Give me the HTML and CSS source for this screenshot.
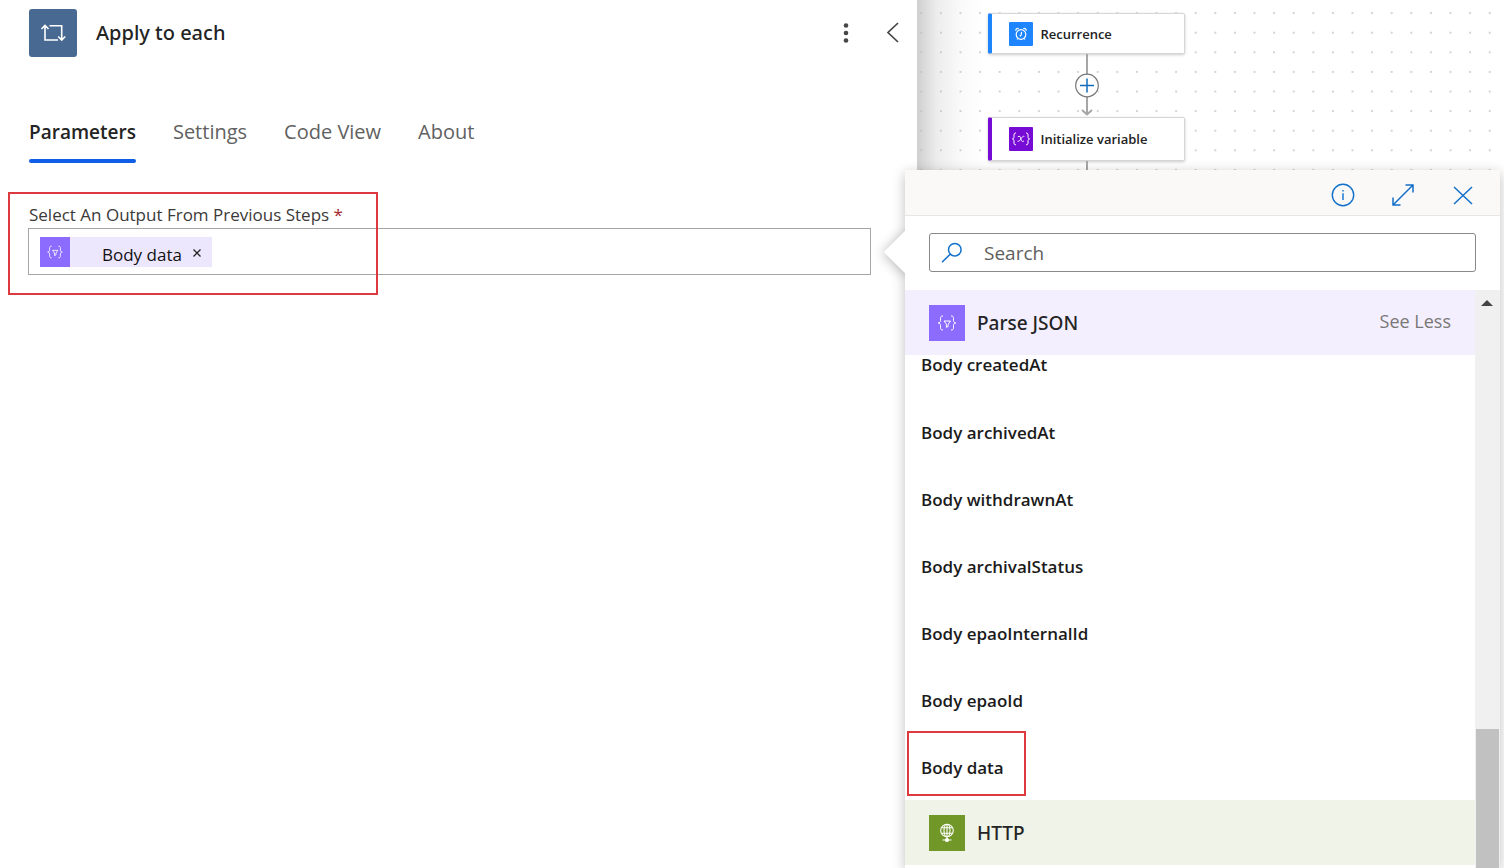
FILE: index.html
```html
<!DOCTYPE html>
<html lang="en">
<head>
<meta charset="utf-8">
<title>Apply to each</title>
<meta name="viewport" content="width=device-width, initial-scale=1">
<link rel="stylesheet" href="styles.css">
</head>
<body>
<svg class="sprite" aria-hidden="true">
  <symbol id="parse" viewBox="0 0 36 36">
    <path d="M14 11c-2 0-2.500 .8-2.500 2.300v2.200c0 1.500-.6 2.300-2.300 2.500 1.700 .2 2.300 1 2.300 2.500v2.200c0 1.500 .5 2.300 2.500 2.300M22 11c2 0 2.500 .8 2.500 2.300v2.200c0 1.500 .6 2.300 2.300 2.500-1.700 .2-2.300 1-2.300 2.500v2.200c0 1.500-.5 2.300-2.500 2.300" />
    <path d="M15 16h6.500l-2.300 3.200v2.300l-1.800 .8v-3.100z" />
  </symbol>
</svg>
<div class="app">
  <main class="panel">
    <header class="panel-header">
      <span class="panel-icon">
        <svg width="48" height="48" viewBox="0 0 48 48" fill="none" stroke="#fff" stroke-width="1.600"><path d="M16 17v14h13M12.500 20l3.500-3.500 3.500 3.500M20.500 16.800h12.200V30.500M29.200 27.500l3.500 3.500 3.500-3.500"/></svg>
      </span>
      <h1 class="panel-title">Apply to each</h1>
      <button class="icon-button" type="button" aria-label="More commands">
        <svg width="20" height="24" viewBox="0 0 20 24" fill="#484644"><circle cx="10" cy="4.500" r="2.300"/><circle cx="10" cy="12" r="2.300"/><circle cx="10" cy="19.500" r="2.300"/></svg>
      </button>
      <button class="icon-button" type="button" aria-label="Collapse panel">
        <svg width="20" height="24" viewBox="0 0 20 24" fill="none" stroke="#484644" stroke-width="1.700"><path d="M15 2L5 11.500l10 9.500"/></svg>
      </button>
    </header>
    <nav class="tabs" role="tablist">
      <button class="tab tab-active" type="button" role="tab" aria-selected="true">Parameters</button>
      <button class="tab" type="button" role="tab">Settings</button>
      <button class="tab" type="button" role="tab">Code View</button>
      <button class="tab" type="button" role="tab">About</button>
    </nav>
    <section class="field">
      <label class="field-label" for="output">Select An Output From Previous Steps <span class="required">*</span></label>
      <div class="token-box">
        <span class="token">
          <span class="token-icon"><svg class="glyph" width="30" height="30"><use href="#parse"/></svg></span>
          <span class="token-text">Body data</span>
          <button class="token-remove" type="button" aria-label="Remove Body data"><svg width="10" height="10" viewBox="0 0 10 10" stroke="#222" stroke-width="1.300"><path d="M1.500 2.500l7 7M8.500 2.500l-7 7"/></svg></button>
        </span>
        <input class="token-input" id="output" type="text">
      </div>
      <span class="highlight highlight-field"></span>
    </section>
  </main>

  <section class="canvas" aria-label="Flow designer">
    <svg class="grid" aria-hidden="true">
      <defs><pattern id="dots" x="-5.500" y="3.300" width="19.600" height="19.600" patternUnits="userSpaceOnUse"><circle cx="9.800" cy="9.800" r=".9" fill="#c0c0c0"/></pattern></defs>
      <rect width="100%" height="100%" fill="url(#dots)"/>
    </svg>
    <div class="flow">
      <article class="node node-blue">
        <svg class="node-icon" width="24" height="24" viewBox="0 0 24 24" fill="none" stroke="#fff" stroke-width="1.200"><rect width="24" height="24" rx="1" fill="#1f85ff" stroke="none"/><circle cx="12" cy="12.500" r="4.800"/><path d="M12.600 9.800l-.5 3.200-1.300 1.200M7 8.700c-.5-1.600 1.200-2.900 2.700-1.900M17 8.700c.5-1.600-1.200-2.900-2.700-1.900M8.800 16.500l-.8 1M15.200 16.500l.8 1"/></svg>
        <span>Recurrence</span>
      </article>
      <div class="connector">
        <svg width="24" height="63" viewBox="0 0 24 63" fill="none" stroke="#a6a6a6" stroke-width="2"><path d="M12 0v61M7 56l5 4.500 5-4.500"/><circle cx="12" cy="31.500" r="11.300" fill="#fff" stroke="#777" stroke-width="1.200"/><path d="M12 24.500v14M5 31.500h14" stroke="#0f6cbd" stroke-width="1.500"/></svg>
      </div>
      <article class="node node-purple">
        <svg class="node-icon" width="24" height="24" viewBox="0 0 24 24" fill="none" stroke="#fff" stroke-width="1"><rect width="24" height="24" rx="1" fill="#770bd6" stroke="none"/><path d="M7 6c-1.500 0-2 .6-2 1.800v2c0 1.200-.4 1.900-1.600 2.100 1.200 .2 1.600 .9 1.600 2.100v2c0 1.200 .5 1.800 2 1.800M17 6c1.500 0 2 .6 2 1.800v2c0 1.200 .4 1.900 1.600 2.100-1.200 .2-1.600 .9-1.600 2.100v2c0 1.200-.5 1.800-2 1.800"/><path d="M8.800 9.800c1.800-1.200 2.500-.4 3 1.800s1.200 3.700 3.200 2.300M15.300 9.500c-1.200-.7-2.200 .6-3.200 2.100s-2 3.200-3.500 2.600"/></svg>
        <span>Initialize variable</span>
      </article>
      <div class="connector connector-tail"><svg width="24" height="20" stroke="#a6a6a6" stroke-width="2"><path d="M12 0v20"/></svg></div>
    </div>
  </section>

  <aside class="picker">
    <div class="picker-body">
      <header class="picker-toolbar">
        <button class="tool" type="button" aria-label="Information"><svg width="24" height="24" viewBox="0 0 24 24" fill="none" stroke="#1170c9" stroke-width="1.400"><circle cx="12" cy="12" r="10.700"/><path d="M12 10.300v6.700M12 7v1.500"/></svg></button>
        <button class="tool" type="button" aria-label="Expand"><svg width="24" height="24" viewBox="0 0 24 24" fill="none" stroke="#1170c9" stroke-width="1.500"><path d="M2 22L22 2M14.500 2H22v7.500M2 14.500V22h7.500"/></svg></button>
        <button class="tool" type="button" aria-label="Close"><svg width="24" height="24" viewBox="0 0 24 24" fill="none" stroke="#1170c9" stroke-width="1.500"><path d="M3 4l18 17M21 4L3 21"/></svg></button>
      </header>
      <label class="search">
        <svg width="22" height="22" viewBox="0 0 22 22" fill="none" stroke="#1170c9" stroke-width="1.500"><circle cx="13.800" cy="7.700" r="6.300"/><path d="M9.200 12.200L1 20.300"/></svg>
        <input class="search-input" type="search" placeholder="Search" aria-label="Search">
      </label>
      <div class="picker-scroll">
        <div class="results">
          <div class="group group-parse">
            <svg class="group-icon glyph" width="36" height="36"><use href="#parse"/></svg>
            <h2 class="group-title">Parse JSON</h2>
            <button class="see-less" type="button">See Less</button>
          </div>
          <ul class="items">
            <li class="item-row item-row-cut"><button class="item" type="button">Body createdAt</button></li>
            <li class="item-row"><button class="item" type="button">Body archivedAt</button></li>
            <li class="item-row"><button class="item" type="button">Body withdrawnAt</button></li>
            <li class="item-row"><button class="item" type="button">Body archivalStatus</button></li>
            <li class="item-row"><button class="item" type="button">Body epaoInternalId</button></li>
            <li class="item-row"><button class="item" type="button">Body epaoId</button></li>
            <li class="item-row"><button class="item" type="button">Body data</button><span class="highlight highlight-item"></span></li>
          </ul>
          <div class="group group-http">
            <svg class="group-icon" width="36" height="36" viewBox="0 0 36 36" fill="none" stroke="#fff" stroke-width="1.100"><circle cx="18" cy="15.500" r="6.300"/><ellipse cx="18" cy="15.500" rx="3" ry="6.300"/><path d="M18 9.200v15M12.500 12.700h11M12.500 18.300h11M13.500 25h9"/><circle cx="18" cy="25" r="1.500" fill="#fff"/></svg>
            <h2 class="group-title">HTTP</h2>
          </div>
        </div>
        <div class="track" aria-hidden="true">
          <svg class="track-arrow" width="24" height="24"><path d="M6 16l6-6 6 6z" fill="#444"/></svg>
          <div class="thumb"></div>
        </div>
      </div>
    </div>
  </aside>
</div>
</body>
</html>
```
FILE: styles.css
```css
* { box-sizing: border-box; }
body {
  margin: 0;
  background: #fff;
  color: #242424;
  font-family: "Open Sans", "Noto Sans", sans-serif;
  font-size: 17px;
}
button, input { font: inherit; color: inherit; }
button { padding: 0; border: 0; background: none; cursor: pointer; }
input { border: 0; outline: 0; background: none; min-width: 0; }
svg { display: block; }
h1, h2, ul { margin: 0; padding: 0; }
ul { list-style: none; }
.sprite { position: absolute; width: 0; height: 0; }
.glyph { fill: none; stroke: #fff; stroke-width: 1; }

.app { position: relative; display: flex; height: 100vh; overflow: hidden; }

.panel { flex: 0 0 61%; background: #fff; padding: 9px 14px 0 28px; }
.panel-header { display: flex; align-items: center; gap: 27px; height: 48px; }
.panel-icon { margin-left: 1px; border-radius: 3px; background: #486991; }
.panel-title { flex: 1; margin-left: -8px; font-family: "Noto Sans", sans-serif; font-size: 20px; font-weight: 500; line-height: 28px; }
.icon-button { width: 20px; }

.tabs { display: flex; gap: 37px; margin: 60px 0 0 1px; }
.tab { position: relative; padding-bottom: 16px; color: #616161; font-size: 20px; line-height: 30px; }
.tab-active { color: #242424; font-size: 19px; font-weight: 600; }
.tab-active::after { content: ""; position: absolute; inset: auto 0 0; height: 4px; border-radius: 2px; background: #0f5fe6; }

.field { position: relative; margin: 40px 32px 0 0; }
.field-label { display: block; margin-left: 1px; padding-bottom: 1px; font-size: 17px; line-height: 24px; color: #3b3a39; }
.required { color: #a4262c; }
.token-box { display: flex; align-items: center; height: 47px; padding: 0 11px; border: 1px solid #a6a6a6; }
.token { display: flex; align-items: center; height: 30px; background: #ede7fe; color: #111; }
.token-icon { background: #8c6cff; }
.token-text { margin-left: 32px; padding-top: 6px; line-height: 24px; }
.token-remove { margin: 0 10px; }
.token-input { flex: 1; }
.highlight { position: absolute; border: 2px solid #dc3a3e; pointer-events: none; }
.highlight-field { inset: -11px auto -20px -20px; width: 370px; }

.canvas {
  position: relative;
  flex: 1;
  padding: 13px 0 0 71px;
  background: linear-gradient(to right, #cfcfcf, #ededed 20px, #fafafa 44px, #fff 68px);
}
.grid { position: absolute; inset: 0; width: 100%; height: 100%; }
.flow { position: relative; width: 197px; }
.node {
  display: flex;
  align-items: center;
  gap: 7px;
  height: 41px;
  padding-left: 17px;
  border: 1px solid #d6d6d6;
  border-left: 4px solid #1f85ff;
  border-radius: 2px;
  background: #fff;
  box-shadow: 0 1px 3px #0003;
  color: #222;
  font-size: 13px;
  font-weight: 600;
}
.node-purple { height: 44px; border-left-color: #770bd6; }
.connector { display: flex; justify-content: center; height: 63px; }

.picker { position: absolute; top: 170px; right: 4px; bottom: 0; left: 905px; z-index: 1; box-shadow: 0 3px 12px #00000040; }
.picker::before {
  content: "";
  position: absolute;
  top: 67px;
  left: -15px;
  width: 30px;
  height: 30px;
  transform: rotate(45deg);
  background: #fff;
  box-shadow: 0 2px 12px #00000040;
}
.picker-body { position: relative; display: flex; flex-direction: column; height: 100%; background: #fff; }
.picker-toolbar { display: flex; justify-content: flex-end; align-items: center; gap: 36px; height: 46px; padding: 4px 25px 0 0; border-bottom: 1px solid #e8e6e4; background: #faf9f8; }
.search { display: flex; align-items: center; gap: 21px; height: 39px; margin: 17px 24px 18px; padding: 0 11px; border: 1px solid #8a8886; border-radius: 3px; }
.search-input { flex: 1; padding: 0; font-size: 19px; line-height: 28px; }
.search-input::placeholder { color: #605e5c; opacity: 1; }
.picker-scroll { display: flex; flex: 1; min-height: 0; }
.results { flex: 1; overflow: hidden; }
.group { display: flex; align-items: center; gap: 12px; height: 65px; padding: 0 24px; }
.group-parse { background: #f3effe; }
.group-http { background: #f0f3e8; }
.group-icon { background: #8c6cff; }
.group-http .group-icon { background: #709727; }
.group-title { flex: 1; font-family: "Noto Sans", sans-serif; font-size: 19px; font-weight: 500; line-height: 28px; }
.see-less { padding-bottom: 4px; color: #797775; font-size: 18px; line-height: 24px; }
.item-row { position: relative; display: flex; align-items: center; height: 67px; padding: 2px 0 0 16px; }
.item-row-cut { align-items: flex-start; height: 43px; padding-top: 0; }
.item { color: #1b1b1b; font-weight: 600; line-height: 20px; }
.highlight-item { inset: -2px auto 4px 2px; width: 119px; }
.track { display: flex; flex-direction: column; justify-content: space-between; width: 25px; background: #f0f0f0; }
.thumb { height: 24%; margin: 0 1px; background: #c1c1c1; }
```
